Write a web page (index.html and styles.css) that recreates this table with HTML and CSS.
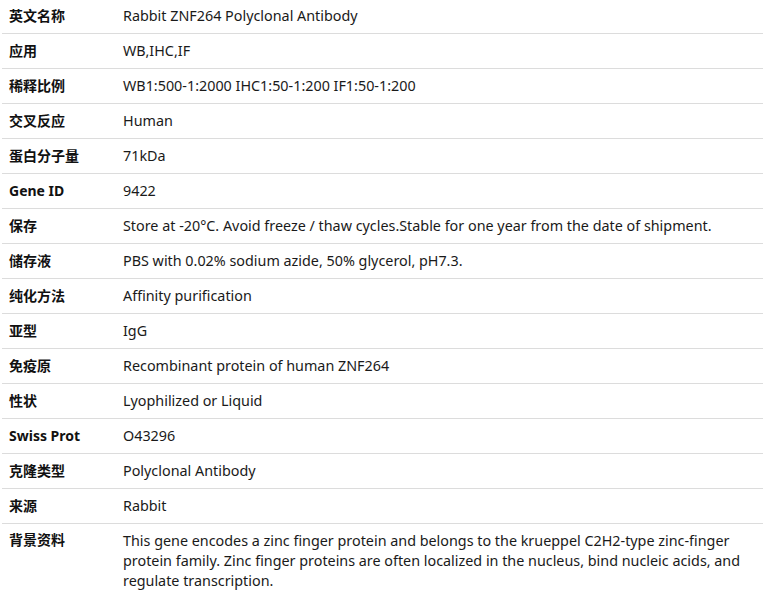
FILE: index.html
```html
<!DOCTYPE html>
<html>
<head>
<meta charset="utf-8">
<link rel="stylesheet" href="styles.css">
</head>
<body>
<table class="spec">
<tbody>
<tr class="first"><th>英文名称</th><td>Rabbit ZNF264 Polyclonal Antibody</td></tr>
<tr><th>应用</th><td>WB,IHC,IF</td></tr>
<tr><th>稀释比例</th><td>WB1:500-1:2000 IHC1:50-1:200 IF1:50-1:200</td></tr>
<tr><th>交叉反应</th><td>Human</td></tr>
<tr><th>蛋白分子量</th><td>71kDa</td></tr>
<tr><th>Gene ID</th><td>9422</td></tr>
<tr><th>保存</th><td>Store at -20°C. Avoid freeze / thaw cycles.Stable for one year from the date of shipment.</td></tr>
<tr><th>储存液</th><td>PBS with 0.02% sodium azide, 50% glycerol, pH7.3.</td></tr>
<tr><th>纯化方法</th><td>Affinity purification</td></tr>
<tr><th>亚型</th><td>IgG</td></tr>
<tr><th>免疫原</th><td>Recombinant protein of human ZNF264</td></tr>
<tr><th>性状</th><td>Lyophilized or Liquid</td></tr>
<tr><th>Swiss Prot</th><td>O43296</td></tr>
<tr><th>克隆类型</th><td>Polyclonal Antibody</td></tr>
<tr><th>来源</th><td>Rabbit</td></tr>
<tr class="last"><th>背景资料</th><td>This gene encodes a zinc finger protein and belongs to the krueppel C2H2-type zinc-finger protein family. Zinc finger proteins are often localized in the nucleus, bind nucleic acids, and regulate transcription.</td></tr>
</tbody>
</table>
</body>
</html>
```

FILE: styles.css
```css
html, body {
  margin: 0;
  padding: 0;
  background: #fff;
}
.spec {
  margin-left: 2px;
  width: 761px;
  border-collapse: collapse;
  font-family: "Noto Sans", "Noto Sans CJK SC", sans-serif;
  font-size: 14.35px;
  color: #1a1a1a;
}
.spec tr {
  border-bottom: 1px solid #dcdcdc;
}
.spec th, .spec td {
  height: 35px;
  padding: 0 8px;
  box-sizing: border-box;
  vertical-align: middle;
  line-height: 20px;
  text-align: left;
}
.spec tr.first th, .spec tr.first td {
  height: 33px;
}
.spec th {
  width: 121px;
  font-size: 14px;
  font-weight: bold;
  color: #111;
  padding-left: 7px;
}
.spec td {
  padding-left: 0;
}
.spec tr.last {
  border-bottom: none;
}
.spec tr.last th, .spec tr.last td {
  vertical-align: top;
  padding-top: 7px;
}
.spec tr.last th {
  padding-top: 6px;
}
```
